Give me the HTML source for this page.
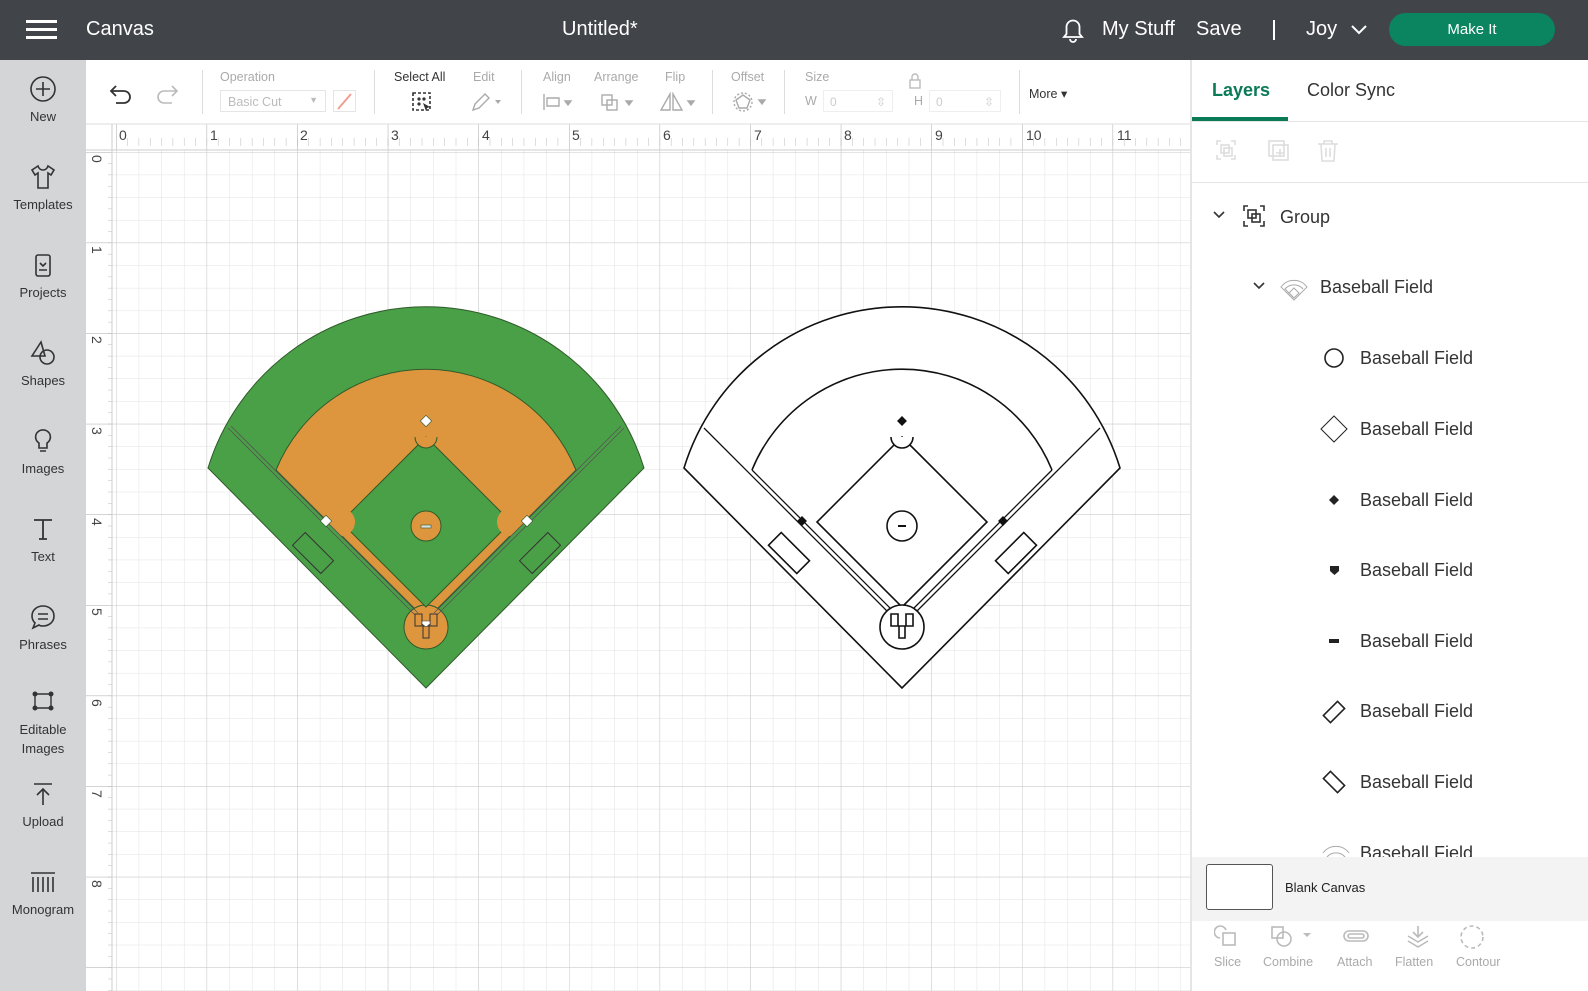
<!DOCTYPE html>
<html><head><meta charset="utf-8"><style>
*{box-sizing:border-box;margin:0;padding:0}
body{width:1588px;height:991px;overflow:hidden;font-family:"Liberation Sans",sans-serif;background:#fff;position:relative;color:#333}
.hdr{position:absolute;left:0;top:0;width:1588px;height:60px;background:#414449;color:#fff}
.hdr span{position:absolute;font-size:20px;top:18px}
.side{position:absolute;left:0;top:60px;width:86px;height:931px;background:#d4d5d6}
.si{position:absolute;left:0;width:86px;text-align:center;font-size:13px;color:#333}
.si svg{display:block;margin:0 auto 6px}
.tb{position:absolute;left:86px;top:60px;width:1104px;height:64px;background:#fff}
.tl{position:absolute;font-size:12.5px;color:#aaa;top:10px}
.sep{position:absolute;top:10px;width:1px;height:44px;background:#ddd}
.panel{position:absolute;left:1190px;top:60px;width:398px;height:931px;background:#fff;border-left:2px solid #e5e5e5}
.li{position:absolute;font-size:18px;color:#333}
.bi{position:absolute;font-size:12.5px;color:#aaa;top:103px;text-align:center}
</style></head><body>
<div class="hdr">
<div style="position:absolute;left:26px;top:20px;width:31px;height:3px;background:#fff;box-shadow:0 8px 0 #fff,0 16px 0 #fff"></div>
<span style="left:86px">Canvas</span>
<span style="left:562px">Untitled*</span>
<svg style="position:absolute;left:1060px;top:16px" width="26" height="28" viewBox="0 0 26 28"><path d="M4 21h18l-2.5-3V11a6.5 6.5 0 0 0-13 0v7z" fill="none" stroke="#fff" stroke-width="1.8"/><path d="M10 23a3 3 0 0 0 6 0" fill="none" stroke="#fff" stroke-width="1.8"/></svg>
<span style="left:1102px">My Stuff</span>
<span style="left:1196px">Save</span>
<div style="position:absolute;left:1273px;top:20px;width:2px;height:20px;background:#fff"></div>
<span style="left:1306px">Joy</span>
<svg style="position:absolute;left:1350px;top:24px" width="18" height="12"><path d="M2 2l7 7 7-7" fill="none" stroke="#fff" stroke-width="2"/></svg>
<div style="position:absolute;left:1389px;top:13px;width:166px;height:33px;border-radius:17px;background:#0a8560;color:#fff;font-size:15px;text-align:center;line-height:33px">Make It</div>
</div>

<div class="side">
<div class="si" style="top:15px"><svg width="28" height="28"><circle cx="14" cy="14" r="12" fill="none" stroke="#333" stroke-width="1.6"/><path d="M14 7v14M7 14h14" stroke="#333" stroke-width="1.6"/></svg>New</div>
<div class="si" style="top:103px"><svg width="28" height="28"><path d="M9 3l-6 4 3 5 3-2v15h10V10l3 2 3-5-6-4c-1 3-3 4-5 4s-4-1-5-4z" fill="none" stroke="#333" stroke-width="1.6"/></svg>Templates</div>
<div class="si" style="top:191px"><svg width="28" height="28"><rect x="7" y="4" width="14" height="21" rx="2" fill="none" stroke="#333" stroke-width="1.6"/><path d="M11 12l3 3 3-3M10 19h8" fill="none" stroke="#333" stroke-width="1.6"/></svg>Projects</div>
<div class="si" style="top:279px"><svg width="28" height="28"><path d="M12 3L3 17h13z" fill="none" stroke="#333" stroke-width="1.6"/><circle cx="18" cy="18" r="7" fill="none" stroke="#333" stroke-width="1.6"/></svg>Shapes</div>
<div class="si" style="top:367px"><svg width="28" height="28"><path d="M14 3a7 7 0 0 0-4 13v5h8v-5a7 7 0 0 0-4-13zM11 24h6" fill="none" stroke="#333" stroke-width="1.6"/></svg>Images</div>
<div class="si" style="top:455px"><svg width="28" height="28"><path d="M5 5h18M14 5v19M10 24h8" fill="none" stroke="#333" stroke-width="1.8"/></svg>Text</div>
<div class="si" style="top:543px"><svg width="28" height="28"><path d="M14 3c6 0 11 4 11 10s-5 10-11 10c-2 0-3 0-4-1l-6 3 2-5c-2-2-3-4-3-7 0-6 5-10 11-10zM9 11h10M9 16h10" fill="none" stroke="#333" stroke-width="1.6"/></svg>Phrases</div>
<div class="si" style="top:626px;line-height:19px"><svg width="28" height="28"><path d="M6 8l16 0M6 8l0 14M22 8l0 14M6 22h16" fill="none" stroke="#333" stroke-width="1.4"/><circle cx="6" cy="8" r="2.5" fill="#333"/><circle cx="22" cy="8" r="2.5" fill="#333"/><circle cx="6" cy="22" r="2.5" fill="#333"/><circle cx="22" cy="22" r="2.5" fill="#333"/></svg>Editable<br>Images</div>
<div class="si" style="top:720px"><svg width="28" height="28"><path d="M5 4h18M14 9v16M8 15l6-6 6 6" fill="none" stroke="#333" stroke-width="1.6"/></svg>Upload</div>
<div class="si" style="top:808px"><svg width="30" height="28"><path d="M3 5h24M5 9v15M10 9v15M15 9v15M20 9v15M25 9v15" fill="none" stroke="#333" stroke-width="1.6"/></svg>Monogram</div>
</div>

<div class="tb">
<svg style="position:absolute;left:22px;top:22px" width="26" height="22"><path d="M8 4L3 9l5 5M3 9h13a6 6 0 0 1 0 12H8" fill="none" stroke="#333" stroke-width="1.8"/></svg>
<svg style="position:absolute;left:68px;top:22px" width="26" height="22"><path d="M18 4l5 5-5 5M23 9H10a6 6 0 0 0 0 12h8" fill="none" stroke="#bbb" stroke-width="1.6"/></svg>
<div class="sep" style="left:116px"></div>
<div class="tl" style="left:134px">Operation</div>
<div style="position:absolute;left:134px;top:30px;width:106px;height:22px;border:1px solid #e5e5e5;font-size:12.5px;color:#bbb;padding:4px 7px">Basic Cut<span style="float:right;font-size:9px">▼</span></div>
<div style="position:absolute;left:247px;top:30px;width:23px;height:22px;border:1px solid #e5e5e5"><svg width="21" height="20"><path d="M4 18L17 3" stroke="#f0a090" stroke-width="2"/></svg></div>
<div class="sep" style="left:288px"></div>
<div class="tl" style="left:308px;color:#333">Select All</div>
<svg style="position:absolute;left:325px;top:31px" width="22" height="22"><rect x="2" y="2" width="17" height="17" fill="none" stroke="#333" stroke-width="1.6" stroke-dasharray="3 2"/><circle cx="8" cy="8" r="1.6" fill="#333"/><circle cx="13" cy="8" r="1.6" fill="#333"/><circle cx="8" cy="13" r="1.6" fill="#333"/><path d="M12 12l7 4-3 1-1 3z" fill="#333"/></svg>
<div class="tl" style="left:387px">Edit</div>
<svg style="position:absolute;left:384px;top:31px" width="34" height="22"><path d="M3 19l2-6 10-10 4 4-10 10z" fill="none" stroke="#aaa" stroke-width="1.4"/><path d="M25 9l3 4 3-4z" fill="#aaa"/></svg>
<div class="sep" style="left:435px"></div>
<div class="tl" style="left:457px">Align</div>
<div class="tl" style="left:508px">Arrange</div>
<div class="tl" style="left:579px">Flip</div>
<svg style="position:absolute;left:456px;top:32px" width="260" height="20" fill="none" stroke="#aaa" stroke-width="1.4"><path d="M2 2v16M5 6h12v8H5z"/><path d="M23 9l3 4 3-4z" fill="#aaa"/><rect x="60" y="3" width="10" height="10"/><rect x="65" y="8" width="10" height="10"/><path d="M84 9l3 4 3-4z" fill="#aaa"/><path d="M128 18V2l-9 16zM131 2v16h9z"/><path d="M146 9l3 4 3-4z" fill="#aaa"/></svg>
<div class="sep" style="left:626px"></div>
<div class="tl" style="left:645px">Offset</div>
<svg style="position:absolute;left:646px;top:31px" width="40" height="22" fill="none" stroke="#aaa" stroke-width="1.4"><path d="M11 4l7 5-3 8H7L4 9z"/><circle cx="11" cy="11" r="9" stroke-dasharray="2 2"/><path d="M27 9l3 4 3-4z" fill="#aaa"/></svg>
<div class="sep" style="left:698px"></div>
<div class="tl" style="left:719px">Size</div>
<div class="tl" style="left:719px;top:34px">W</div>
<div style="position:absolute;left:737px;top:30px;width:70px;height:22px;border:1px solid #eee;font-size:12px;color:#ccc;padding:4px 6px">0<span style="float:right">⇳</span></div>
<div class="tl" style="left:828px;top:34px">H</div>
<div style="position:absolute;left:843px;top:30px;width:72px;height:22px;border:1px solid #eee;font-size:12px;color:#ccc;padding:4px 6px">0<span style="float:right">⇳</span></div>
<svg style="position:absolute;left:820px;top:12px" width="18" height="18" fill="none" stroke="#bbb" stroke-width="1.4"><rect x="4" y="8" width="10" height="8"/><path d="M6 8V5a3 3 0 0 1 6 0v3"/></svg>
<div class="sep" style="left:933px"></div>
<div style="position:absolute;left:943px;top:26px;font-size:12.5px;color:#333">More ▾</div>
</div>

<svg style="position:absolute;left:0;top:0" width="1190" height="991">
<defs>
<pattern id="mn" x="116" y="152" width="22.65" height="22.65" patternUnits="userSpaceOnUse"><path d="M0 0V22.65M0 0H22.65" fill="none" stroke="#e2e2e2" stroke-width="1"/></pattern>
<pattern id="mj" x="116" y="152" width="90.6" height="90.6" patternUnits="userSpaceOnUse"><path d="M0 0V90.6M0 0H90.6" fill="none" stroke="#c9c9c9" stroke-width="1"/></pattern>
<pattern id="rt" x="116" y="0" width="11.325" height="30" patternUnits="userSpaceOnUse"><path d="M0 18V26" stroke="#bbb"/></pattern>
<pattern id="rl" x="0" y="152" width="30" height="11.325" patternUnits="userSpaceOnUse"><path d="M18 0H26" stroke="#bbb"/></pattern>
<pattern id="rtM" x="116" y="0" width="90.6" height="30" patternUnits="userSpaceOnUse"><path d="M0 0V30" stroke="#aaa"/></pattern>
<pattern id="rlM" x="0" y="152" width="30" height="90.6" patternUnits="userSpaceOnUse"><path d="M0 0H30" stroke="#aaa"/></pattern>
</defs>
<rect x="86" y="124" width="1104" height="867" fill="#fff"/>
<rect x="112" y="150" width="1078" height="841" fill="url(#mn)"/>
<rect x="112" y="150" width="1078" height="841" fill="url(#mj)"/>
<rect x="86" y="124" width="1104" height="26" fill="#fff"/>
<rect x="112" y="124" width="1078" height="26" fill="url(#rt)"/>
<rect x="112" y="124" width="1078" height="26" fill="url(#rtM)"/>
<rect x="86" y="150" width="26" height="841" fill="#fff"/>
<rect x="86" y="150" width="26" height="841" fill="url(#rl)"/>
<rect x="86" y="150" width="26" height="841" fill="url(#rlM)"/>
<line x1="86" y1="150" x2="1190" y2="150" stroke="#ccc"/><line x1="112" y1="124" x2="112" y2="991" stroke="#ccc"/>
<line x1="86" y1="124" x2="1190" y2="124" stroke="#ddd"/>
<g font-size="14" fill="#444" font-family="Liberation Sans">
<text x="119" y="140">0</text><text x="210" y="140">1</text><text x="300" y="140">2</text><text x="391" y="140">3</text><text x="482" y="140">4</text><text x="572" y="140">5</text><text x="663" y="140">6</text><text x="754" y="140">7</text><text x="844" y="140">8</text><text x="935" y="140">9</text><text x="1026" y="140">10</text><text x="1117" y="140">11</text>
</g>
<g font-size="14" fill="#444" font-family="Liberation Sans">
<text transform="translate(92,155) rotate(90)">0</text><text transform="translate(92,246) rotate(90)">1</text><text transform="translate(92,336) rotate(90)">2</text><text transform="translate(92,427) rotate(90)">3</text><text transform="translate(92,518) rotate(90)">4</text><text transform="translate(92,608) rotate(90)">5</text><text transform="translate(92,699) rotate(90)">6</text><text transform="translate(92,790) rotate(90)">7</text><text transform="translate(92,880) rotate(90)">8</text>
</g>
<!-- colored field -->
<g stroke="#2f5a2a" stroke-width="1">
<path d="M426 688L208 468A228 228 0 0 1 644 468Z" fill="#4aa046"/>
<path d="M276 470A162 162 0 0 1 576 470L426 620Z" fill="#de963e"/>
<circle cx="426" cy="627" r="22" fill="#de963e"/>
<path d="M426 437L511 522L426 607L341 522Z" fill="#4aa046"/>
<path d="M415 437A11 11 0 0 0 437 437" fill="#de963e"/>
<path d="M511 508A14 14 0 0 0 511 536L525 522Z" fill="#de963e" stroke="none"/>
<path d="M341 508A14 14 0 0 1 341 536L327 522Z" fill="#de963e" stroke="none"/>
<circle cx="426" cy="526" r="15" fill="#de963e"/>
<rect x="421" y="525" width="10" height="3" fill="#ddd" stroke-width="0.6"/>
<path d="M228 428L415 615M231 426L418 613M624 428L437 615M621 426L434 613" fill="none" stroke="#555" stroke-width="0.8"/>
<rect x="-20" y="-9" width="40" height="18" fill="none" stroke="#333" transform="translate(313,553) rotate(45)"/>
<rect x="-20" y="-9" width="40" height="18" fill="none" stroke="#333" transform="translate(540,553) rotate(-45)"/>
<path d="M415 614h7v12h-7zM430 614h7v12h-7zM423 626h6v12h-6z" fill="none" stroke="#333"/>
<path d="M422 621h8v3l-4 3-4-3z" fill="#fff" stroke="#333" stroke-width="0.6"/>
<rect x="-4" y="-4" width="8" height="8" fill="#fff" stroke-width="0.6" transform="translate(426,421) rotate(45)"/>
<rect x="-4" y="-4" width="8" height="8" fill="#fff" stroke-width="0.6" transform="translate(527,521) rotate(45)"/>
<rect x="-4" y="-4" width="8" height="8" fill="#fff" stroke-width="0.6" transform="translate(326,521) rotate(45)"/>
</g>
<!-- outline field -->
<g transform="translate(476,0)" fill="none" stroke="#111" stroke-width="1.6">
<path d="M426 688L208 468A228 228 0 0 1 644 468Z" fill="#fff"/>
<path d="M276 470A162 162 0 0 1 576 470"/>
<path d="M426 437L511 522L426 607L341 522Z" fill="#fff"/>
<path d="M415 437A11 11 0 0 0 437 437" fill="#fff"/>
<circle cx="426" cy="526" r="15"/>
<rect x="422" y="525" width="8" height="2" fill="#111" stroke="none"/>
<path d="M228 428L414 614M276 470L417 611M624 428L438 614M576 470L435 611" stroke-width="1.3"/>
<circle cx="426" cy="627" r="22" fill="#fff"/>
<rect x="-20" y="-9" width="40" height="18" transform="translate(313,553) rotate(45)"/>
<rect x="-20" y="-9" width="40" height="18" transform="translate(540,553) rotate(-45)"/>
<path d="M415 614h7v12h-7zM430 614h7v12h-7zM423 626h6v12h-6z"/>
<rect x="-3.5" y="-3.5" width="7" height="7" fill="#111" stroke="none" transform="translate(426,421) rotate(45)"/>
<rect x="-3.5" y="-3.5" width="7" height="7" fill="#111" stroke="none" transform="translate(527,521) rotate(45)"/>
<rect x="-3.5" y="-3.5" width="7" height="7" fill="#111" stroke="none" transform="translate(326,521) rotate(45)"/>
</g>
</svg>

<div class="panel">
<div style="position:absolute;left:20px;top:20px;font-size:18px;font-weight:bold;color:#0a7a57">Layers</div>
<div style="position:absolute;left:115px;top:20px;font-size:18px;color:#333">Color Sync</div>
<div style="position:absolute;left:0;top:57px;width:96px;height:4px;background:#0a7a57"></div>
<div style="position:absolute;left:0;top:61px;width:396px;height:1px;background:#e5e5e5"></div>
<svg style="position:absolute;left:22px;top:78px" width="130" height="28" fill="none" stroke="#ddd" stroke-width="1.6"><path d="M3 7V3h4M17 3h4v4M3 17v4h4M21 17v4h-4"/><rect x="7" y="7" width="8" height="8"/><rect x="10" y="10" width="8" height="8"/><rect x="55" y="3" width="15" height="15"/><rect x="59" y="7" width="15" height="15"/><path d="M66 11v8M62 15h8"/><path d="M104 6h20M110 6V3h8v3M107 6l1 17h12l1-17M112 10v9M116 10v9"/></svg>
<div style="position:absolute;left:0;top:122px;width:396px;height:1px;background:#e5e5e5"></div>
<svg style="position:absolute;left:20px;top:150px" width="14" height="10"><path d="M2 2l5 5 5-5" fill="none" stroke="#333" stroke-width="1.6"/></svg>
<svg style="position:absolute;left:50px;top:144px" width="26" height="26" fill="none" stroke="#333" stroke-width="1.6"><path d="M2 7V2h4M18 2h4v5M2 17v5h4M22 17v5h-4"/><rect x="6" y="6" width="8" height="8"/><rect x="10" y="10" width="8" height="8"/></svg>
<div class="li" style="left:88px;top:147px">Group</div>
<svg style="position:absolute;left:60px;top:221px" width="14" height="10"><path d="M2 2l5 5 5-5" fill="none" stroke="#333" stroke-width="1.6"/></svg>
<svg style="position:absolute;left:86px;top:214px" width="32" height="28" fill="none" stroke="#aaa" stroke-width="1"><path d="M16 26L3 13A16 16 0 0 1 29 13Z"/><path d="M16 24L7 15A12 12 0 0 1 25 15"/><path d="M16 14l5 5-5 5-5-5z"/></svg>
<div class="li" style="left:128px;top:217px">Baseball Field</div>
<svg style="position:absolute;left:130px;top:286px" width="24" height="24"><circle cx="12" cy="12" r="9" fill="none" stroke="#222" stroke-width="1.6"/></svg>
<div class="li" style="left:168px;top:288px">Baseball Field</div>
<svg style="position:absolute;left:127px;top:354px" width="30" height="30"><path d="M15 2L28 15 15 28 2 15Z" fill="none" stroke="#222" stroke-width="1"/></svg>
<div class="li" style="left:168px;top:359px">Baseball Field</div>
<svg style="position:absolute;left:136px;top:434px" width="12" height="12"><path d="M6 1l5 5-5 5-5-5z" fill="#222"/></svg>
<div class="li" style="left:168px;top:430px">Baseball Field</div>
<svg style="position:absolute;left:137px;top:505px" width="12" height="12"><path d="M1 1h9v5l-4.5 4-4.5-4z" fill="#222"/></svg>
<div class="li" style="left:168px;top:500px">Baseball Field</div>
<div style="position:absolute;left:137px;top:579px;width:10px;height:4px;background:#222"></div>
<div class="li" style="left:168px;top:571px">Baseball Field</div>
<svg style="position:absolute;left:130px;top:640px" width="24" height="24"><rect x="-5" y="-10" width="10" height="20" fill="none" stroke="#222" stroke-width="1.6" transform="translate(12,12) rotate(45)"/></svg>
<div class="li" style="left:168px;top:641px">Baseball Field</div>
<svg style="position:absolute;left:130px;top:710px" width="24" height="24"><rect x="-5" y="-10" width="10" height="20" fill="none" stroke="#222" stroke-width="1.6" transform="translate(12,12) rotate(-45)"/></svg>
<div class="li" style="left:168px;top:712px">Baseball Field</div>
<svg style="position:absolute;left:128px;top:780px" width="32" height="20" fill="none" stroke="#aaa" stroke-width="1"><path d="M3 13A16 16 0 0 1 29 13M7 17A12 12 0 0 1 25 17"/></svg>
<div class="li" style="left:168px;top:783px">Baseball Field</div>
<div style="position:absolute;left:0;top:797px;width:396px;height:64px;background:#f3f3f3"></div>
<div style="position:absolute;left:14px;top:804px;width:67px;height:46px;border:1.5px solid #555;border-radius:3px;background:#fff"></div>
<div style="position:absolute;left:93px;top:820px;font-size:13px;color:#222">Blank Canvas</div>
<div style="position:absolute;left:0;top:861px;width:396px;height:70px;background:#fff"></div>
<svg style="position:absolute;left:22px;top:864px" width="300" height="30" fill="none" stroke="#bbb" stroke-width="1.6"><path d="M12 6a6 6 0 1 0-6 8"/><rect x="9" y="9" width="12" height="12"/><rect x="58" y="3" width="11" height="11"/><circle cx="70" cy="15" r="7"/><path d="M89 9l4 4 4-4z" fill="#bbb" stroke="none"/><rect x="130" y="7" width="24" height="10" rx="5"/><rect x="134" y="10" width="16" height="4" rx="2"/><path d="M204 2v10M199 8l5 5 5-5M194 12l10 6 10-6M194 17l10 6 10-6"/><circle cx="258" cy="13" r="11" stroke-dasharray="4 3"/></svg>
<div class="bi" style="left:22px;top:895px">Slice</div>
<div class="bi" style="left:71px;top:895px">Combine</div>
<div class="bi" style="left:145px;top:895px">Attach</div>
<div class="bi" style="left:203px;top:895px">Flatten</div>
<div class="bi" style="left:264px;top:895px">Contour</div>
</div>
</body></html>
